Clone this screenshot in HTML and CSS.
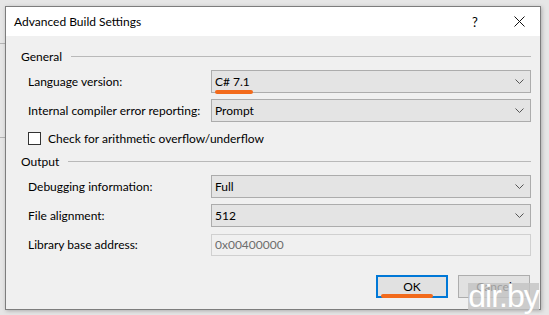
FILE: index.html
```html
<!DOCTYPE html>
<html lang="en">
<head>
  <meta charset="UTF-8" />
  <title>Advanced Build Settings</title>
  <link rel="stylesheet" href="styles.css">
</head>
<body>
  <div class="backdrop">
    <span class="bg-line bg-line-top"></span>
    <span class="bg-line bg-line-mid"></span>
  </div>

  <div class="dialog">
    <div class="titlebar">
      <span class="title">Advanced Build Settings</span>
      <span class="title-help">?</span>
      <span class="title-close">
        <svg width="11" height="11" viewBox="0 0 11 11"><path d="M0.5 0.5 L10.5 10.5 M10.5 0.5 L0.5 10.5" stroke="#111" stroke-width="1" fill="none"/></svg>
      </span>
    </div>

    <div class="content">
      <div class="group-head"><span>General</span><span class="rule"></span></div>

      <div class="row">
        <label>Language version:</label>
        <div class="combo">
          <span>C# 7.1</span>
          <svg class="arrow" width="9" height="5" viewBox="0 0 9 5"><path d="M0.5 0.5 L4.5 4.5 L8.5 0.5" stroke="#555" fill="none"/></svg>
          <i class="underline underline-combo"></i>
        </div>
      </div>

      <div class="row">
        <label>Internal compiler error reporting:</label>
        <div class="combo">
          <span>Prompt</span>
          <svg class="arrow" width="9" height="5" viewBox="0 0 9 5"><path d="M0.5 0.5 L4.5 4.5 L8.5 0.5" stroke="#555" fill="none"/></svg>
        </div>
      </div>

      <div class="check-row">
        <span class="checkbox"></span>
        <span>Check for arithmetic overflow/underflow</span>
      </div>

      <div class="group-head"><span>Output</span><span class="rule"></span></div>

      <div class="row">
        <label>Debugging information:</label>
        <div class="combo">
          <span>Full</span>
          <svg class="arrow" width="9" height="5" viewBox="0 0 9 5"><path d="M0.5 0.5 L4.5 4.5 L8.5 0.5" stroke="#555" fill="none"/></svg>
        </div>
      </div>

      <div class="row">
        <label>File alignment:</label>
        <div class="combo">
          <span>512</span>
          <svg class="arrow" width="9" height="5" viewBox="0 0 9 5"><path d="M0.5 0.5 L4.5 4.5 L8.5 0.5" stroke="#555" fill="none"/></svg>
        </div>
      </div>

      <div class="row">
        <label>Library base address:</label>
        <div class="textbox">0x00400000</div>
      </div>

      <div class="buttons">
        <button class="btn btn-default">OK<i class="underline underline-btn"></i></button>
        <button class="btn">Cancel</button>
      </div>
    </div>
  </div>

  <div class="watermark">dir.by</div>
</body>
</html>
```

FILE: styles.css
```css
body {
  margin: 0;
  background-color: #e6e6e6;
  font-family: 'Lato', 'Noto Sans', sans-serif;
  font-size: 12px;
  color: #000;
  width: 549px;
  height: 315px;
  overflow: hidden;
  position: relative;
}

.backdrop {
  position: absolute;
  left: 0;
  top: 0;
  width: 549px;
  height: 315px;
}

.bg-line {
  position: absolute;
  left: 0;
  width: 8px;
  height: 1px;
  background-color: #b4b4b4;
}

.bg-line-top { top: 43px; }
.bg-line-mid { top: 137px; }

.dialog {
  position: relative;
  margin: 6px 0 0 5px;
  width: 534px;
  height: 302px;
  border: 1px solid #7d7d7d;
  background-color: #f0f0f0;
  box-shadow: 1px 1px 4px rgba(0, 0, 0, 0.25);
  display: flex;
  flex-direction: column;
  white-space: nowrap;
}

.titlebar {
  height: 29px;
  background-color: #fff;
  display: flex;
  align-items: center;
  padding-left: 8px;
}

.title {
  flex: 1;
  padding-bottom: 1px;
}

.title-help {
  width: 12px;
  text-align: center;
  margin-right: 33px;
  font-size: 13px;
}

.title-close {
  display: flex;
  margin-right: 15px;
}

.content {
  flex: 1;
  padding: 12px 9px 0 15px;
  display: flex;
  flex-direction: column;
}

.group-head {
  height: 16px;
  display: flex;
  align-items: center;
  margin-bottom: 6px;
}

.group-head .rule {
  flex: 1;
  height: 1px;
  background-color: #b9b9b9;
  margin-left: 9px;
}

.row {
  display: flex;
  align-items: center;
  height: 23px;
  padding-left: 7px;
  margin-bottom: 6px;
}

.row label {
  width: 183px;
}

.combo, .textbox {
  position: relative;
  flex: 1;
  height: 23px;
  box-sizing: border-box;
  display: flex;
  align-items: center;
  padding-left: 3px;
}

.combo {
  background-color: #e4e4e4;
  border: 1px solid #acacac;
}

.combo span {
  flex: 1;
}

.arrow {
  margin-right: 6px;
}

.textbox {
  height: 22px;
  background-color: #f0f0f0;
  border: 1px solid #d0d0d0;
  color: #6d6d6d;
}

.check-row {
  display: flex;
  align-items: center;
  height: 20px;
  padding-left: 7px;
  margin-bottom: 5px;
}

.checkbox {
  width: 11px;
  height: 11px;
  border: 1px solid #333;
  background-color: #fff;
  margin-right: 7px;
}

.buttons {
  display: flex;
  justify-content: flex-end;
  gap: 10px;
  margin-top: 13px;
  padding-right: 1px;
}

.btn {
  position: relative;
  width: 72px;
  height: 23px;
  font-family: inherit;
  font-size: 12px;
  background-color: #e1e1e1;
  border: 1px solid #adadad;
  padding: 0;
  color: #000;
}

.btn-default {
  border: 2px solid #0078d7;
}

.underline {
  position: absolute;
  height: 4px;
  background-color: #f26a1b;
  border-radius: 2px;
}

.underline-combo {
  left: 3px;
  width: 38px;
  bottom: -2px;
}

.underline-btn {
  left: 3px;
  width: 52px;
  bottom: -2px;
}

.watermark {
  position: absolute;
  left: 468px;
  top: 283px;
  width: 71px;
  height: 27px;
  background-color: rgba(195, 195, 195, 0.8);
  color: #fff;
  font-family: 'Liberation Sans', sans-serif;
  font-size: 32px;
  line-height: 26px;
  letter-spacing: -1px;
  text-align: center;
}
```
